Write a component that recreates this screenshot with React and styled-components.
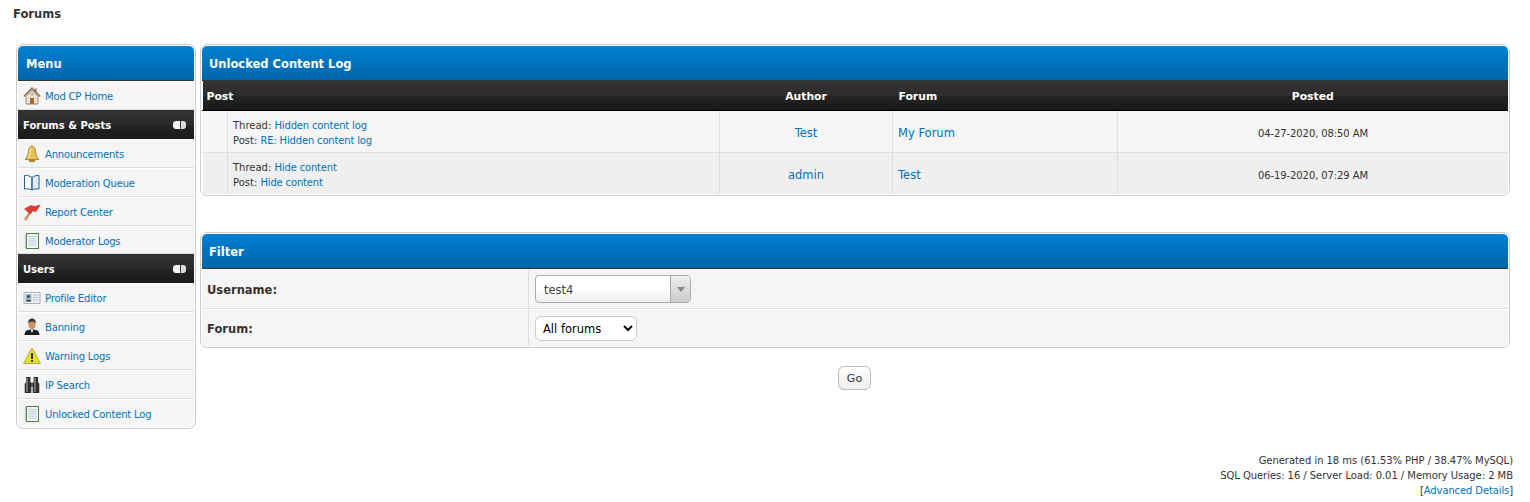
import React from "react";
import styled, { createGlobalStyle } from "styled-components";

const FONT = `"DejaVu Sans", Verdana, sans-serif`;
const DARK_BG = `
  linear-gradient(90deg, #303030 50%, transparent 50%) 0 14px / 2px 1px repeat-x,
  linear-gradient(90deg, transparent 50%, #262626 50%) 0 15px / 2px 1px repeat-x,
  linear-gradient(#333 0%, #2c2c2c 50%, #232323 54%, #1a1a1a 100%)
`;

const Global = createGlobalStyle`
  html, body { margin: 0; padding: 0; background: #fff; }
  body { font-family: ${FONT}; color: #333; font-size: 12px; }
  a { color: #0072bc; text-decoration: none; }
`;

const Page = styled.div`
  width: 1530px;
  height: 502px;
  overflow: hidden;
  position: relative;
`;
const Title = styled.div`
  height: 44px;
  padding: 8px 0 0 13px;
  box-sizing: border-box;
  font-weight: bold;
  font-size: 11.5px;
  line-height: 13px;
  color: #333;
`;
const Columns = styled.div`
  display: flex;
  align-items: flex-start;
  gap: 4px;
  padding: 0 20px 0 16px;
`;
const Panel = styled.div`
  box-sizing: border-box;
  border: 1px solid #ccc;
  border-radius: 7px;
  padding: 1px;
  background: #fff;
  overflow: hidden;
`;
const Side = styled(Panel)`
  width: 180px;
  flex: none;
`;
const Main = styled.div`
  width: 1310px;
  flex: none;
`;
const Blue = styled.div`
  height: 35px;
  box-sizing: border-box;
  padding: 2px 0 0 ${p => p.$pad || 8}px;
  display: flex;
  align-items: center;
  background: linear-gradient(#0080d4 0%, #0066a8 100%);
  border-bottom: 1px solid #263c30;
  border-radius: 5px 5px 0 0;
  color: #fff;
  font-weight: bold;
  font-size: 11.5px;
`;
const Dark = styled.div`
  height: 29px;
  box-sizing: border-box;
  padding: 1px 8px 0 5px;
  display: flex;
  align-items: center;
  justify-content: space-between;
  background: ${DARK_BG};
  color: #fff;
  font-weight: bold;
  font-size: 10px;
`;
const Toggle = styled.span`
  width: 13px;
  height: 8px;
  border-radius: 3px;
  background: linear-gradient(90deg, #f4f4f4 0 52%, #333 52% 60%, #dcdcdc 60% 100%);
`;
const MenuItem = styled.a`
  height: ${p => (p.$short ? 28 : 29)}px;
  box-sizing: border-box;
  display: flex;
  align-items: center;
  gap: 4px;
  padding: ${p => (p.$short ? 2 : 1)}px 0 0 5px;
  background: #f5f5f5;
  border-bottom: 1px solid #ddd;
  border-top: 1px solid #fff;
  font-size: 10px;
  letter-spacing: -0.18px;
  color: #0072bc;
  &:last-child { height: 28px; border-bottom: 0; }
`;
const IconBox = styled.svg`
  width: 18px;
  height: 18px;
  flex: none;
`;
const Table = styled.table`
  width: 100%;
  border-collapse: collapse;
  table-layout: fixed;
  font-size: 10px;
`;
const Th = styled.th`
  box-sizing: border-box;
  height: 29px;
  padding: 2px 0 0 ${p => p.$pad || 0}px;
  background: ${DARK_BG};
  border-bottom: 1px solid #000;
  color: #fff;
  font-size: 10.8px;
  text-align: ${p => p.$align || "center"};
`;
const Td = styled.td`
  box-sizing: border-box;
  height: 42px;
  padding: 4px 0 0 ${p => p.$pad || 0}px;
  background: ${p => (p.$alt ? "#efefef" : "#f5f5f5")};
  border-right: ${p => (p.$end ? "0" : "1px solid #ddd")};
  border-left: 1px solid #fff;
  border-bottom: ${p => (p.$alt ? "0" : "1px solid #ddd")};
  border-top: 1px solid #fff;
  text-align: ${p => p.$align || "left"};
  line-height: 15px;
  font-size: ${p => p.$size || 10}px;
  letter-spacing: ${p => p.$track || 0}px;
  color: #333;
`;
const PostLink = styled.a`
  letter-spacing: -0.17px;
`;
const Row = styled.div`
  display: grid;
  grid-template-columns: 327px 1fr;
  height: ${p => p.$h}px;
  box-sizing: border-box;
  background: #f5f5f5;
  border-bottom: ${p => (p.$last ? "0" : "1px solid #ddd")};
  border-top: 1px solid #fff;
`;
const Label = styled.div`
  border-right: 1px solid #ddd;
  display: flex;
  align-items: center;
  padding: 1px 0 0 5px;
  font-weight: bold;
  font-size: 11.5px;
  color: #333;
`;
const Field = styled.div`
  display: flex;
  align-items: center;
  padding-left: 6px;
`;
const Combo = styled.div`
  width: 156px;
  height: 28px;
  box-sizing: border-box;
  border: 1px solid #aaa;
  border-radius: 4px;
  background: linear-gradient(#fff 50%, #eee 100%);
  display: flex;
  align-items: center;
  justify-content: space-between;
  padding-left: 8px;
  font-size: 11.5px;
  line-height: 28px;
  color: #444;
  overflow: hidden;
`;
const ComboText = styled.span`
  padding-top: 2px;
`;
const ComboArrow = styled.div`
  width: 19px;
  height: 100%;
  border-left: 1px solid #aaa;
  background: linear-gradient(#eee, #ccc);
  display: flex;
  align-items: center;
  justify-content: center;
  &::after {
    content: "";
    border: 4px solid transparent;
    border-top: 5px solid #888;
    border-bottom: 0;
  }
`;
const Select = styled.select`
  width: 102px;
  height: 25px;
  box-sizing: border-box;
  border: 1px solid #ccc;
  border-radius: 6px;
  background: #fff;
  padding: 1px 0 0 3px;
  font-family: ${FONT};
  font-size: 11.5px;
  color: #000;
`;
const Actions = styled.div`
  display: flex;
  justify-content: center;
  margin-top: 18px;
  padding-right: 2px;
`;
const Button = styled.button`
  width: 33px;
  height: 24px;
  padding: 0 0 0 1px;
  box-sizing: border-box;
  border: 1px solid #bbb;
  border-radius: 6px;
  background: linear-gradient(#fff, #eee);
  font-family: ${FONT};
  font-size: 11px;
  color: #333;
`;
const Spacer = styled.div`
  height: 36px;
`;
const Footer = styled.div`
  position: absolute;
  right: 17px;
  top: 453px;
  text-align: right;
  font-size: 10px;
  letter-spacing: -0.05px;
  line-height: 15px;
  color: #333;
`;
const DetailsLink = styled.a`
  letter-spacing: -0.12px;
`;

const House = () => (
  <IconBox viewBox="0 0 18 18">
    <path d="M3 9.5 9 3.5 15 9.5V17H3Z" fill="#efe2cd" stroke="#8a7058" strokeWidth=".8" />
    <path d="M.8 9.5 9 1.2 17.2 9.5" fill="none" stroke="#8d6f55" strokeWidth="1.7" />
    <rect x="11.8" y="1.5" width="1.8" height="3.5" fill="#9a6a50" />
    <rect x="7" y="11" width="4" height="6" fill="#b1642a" />
    <circle cx="9" cy="7.4" r="1.2" fill="#8fa6b8" />
  </IconBox>
);
const Bell = () => (
  <IconBox viewBox="0 0 18 18">
    <path d="M9 1C6 1.5 5.6 4 5.3 8 5 11 3.4 12.6 2.2 14.5H15.8C14.6 12.6 13 11 12.7 8 12.4 4 12 1.5 9 1Z" fill="#e8c35a" stroke="#a2802a" strokeWidth=".9" />
    <path d="M7.4 3.5C6.8 6 7 10 5.5 13" stroke="#f7e7a8" strokeWidth="1.1" fill="none" />
    <ellipse cx="9" cy="15.8" rx="3.4" ry="1.4" fill="#a8842c" />
  </IconBox>
);
const Book = () => (
  <IconBox viewBox="0 0 18 18">
    <path d="M1.5 1.5C4 1.2 7 2 8.8 3.2V16C7 15 4 14.5 1.5 15Z" fill="#f4f9fc" stroke="#2a5f8c" />
    <path d="M16 1.5C13.5 1.2 10.8 2 9.2 3.2V16C10.8 15 13.5 14.5 16 15Z" fill="#e0ecf4" stroke="#2a5f8c" />
  </IconBox>
);
const Flag = () => (
  <IconBox viewBox="0 0 18 18">
    <path d="M2 17 8 8" stroke="#d2935c" strokeWidth="2.4" />
    <path d="M1.5 6 7.5 2.5 12 3.5 17.2 2 13 8.5 9.5 8 7.5 11Z" fill="#e23a32" stroke="#b32a24" strokeWidth=".5" />
  </IconBox>
);
const Notes = () => (
  <IconBox viewBox="0 0 18 18">
    <rect x="3.5" y="1.5" width="12" height="15" fill="#f3f8f3" stroke="#4c7d45" />
    <path d="M5.5 4.5H13.5M5.5 6.7H13.5M5.5 8.9H13.5M5.5 11.1H13.5M5.5 13.3H13.5" stroke="#b5cbdb" />
    <path d="M2.6 2.5V16" stroke="#999" strokeWidth="1.6" strokeDasharray="1 1" />
  </IconBox>
);
const Card = () => (
  <IconBox viewBox="0 0 18 18">
    <rect x="1" y="3.5" width="16" height="11" fill="#eef2f4" stroke="#a9b5ba" />
    <rect x="2.5" y="5" width="6" height="7.5" fill="#a5bccc" />
    <circle cx="5.5" cy="7.5" r="1.6" fill="#3f4e5b" />
    <path d="M3 12.5C3 10 8 10 8 12.5Z" fill="#333" />
    <path d="M10 6H15.5M10 8.5H15.5M10 11H15.5" stroke="#b3c0c8" />
  </IconBox>
);
const Person = () => (
  <IconBox viewBox="0 0 18 18">
    <path d="M1.5 17C1.5 12.5 5 11.5 9 11.5S16.5 12.5 16.5 17Z" fill="#1c1c1c" />
    <path d="M7.5 11.5 9 15 10.5 11.5Z" fill="#eee" />
    <ellipse cx="9" cy="6.5" rx="3.6" ry="4.8" fill="#c9936a" />
    <path d="M5.2 5.5C5 1.5 7 .5 9 .5S13 1.5 12.8 5.5C11.5 3.2 6.5 3.2 5.2 5.5Z" fill="#4a3a30" />
  </IconBox>
);
const Warn = () => (
  <IconBox viewBox="0 0 18 18">
    <path d="M9 1 17.5 16.5H.5Z" fill="#e5e02e" stroke="#b5ae35" strokeLinejoin="round" />
    <rect x="8.1" y="6" width="1.8" height="6" fill="#222" />
    <rect x="8.1" y="13" width="1.8" height="1.8" fill="#222" />
  </IconBox>
);
const Binoculars = () => (
  <IconBox viewBox="0 0 18 18">
    <path d="M3 1H7.4V6L8.3 8V17H1.7V8L3 6Z" fill="#2e2e2e" />
    <path d="M10.6 1H15V6L16.3 8V17H9.7V8L10.6 6Z" fill="#2e2e2e" />
    <rect x="8" y="6.5" width="2" height="4.5" fill="#555" />
    <rect x="3.2" y="2" width="1.6" height="14" fill="#808080" />
    <rect x="11.2" y="2" width="1.6" height="14" fill="#808080" />
  </IconBox>
);

const menu1 = [
  [Bell, "Announcements"],
  [Book, "Moderation Queue"],
  [Flag, "Report Center"],
  [Notes, "Moderator Logs"],
];
const menu2 = [
  [Card, "Profile Editor"],
  [Person, "Banning"],
  [Warn, "Warning Logs"],
  [Binoculars, "IP Search"],
  [Notes, "Unlocked Content Log"],
];

const Item = ({ icon: I, label, short }) => (
  <MenuItem href="#" $short={short}><I />{label}</MenuItem>
);

export default function App() {
  return (
    <Page>
      <Global />
      <Title>Forums</Title>
      <Columns>
        <Side>
          <Blue>Menu</Blue>
          <Item icon={House} label="Mod CP Home" />
          <Dark>Forums &amp; Posts<Toggle /></Dark>
          {menu1.map(([i, l], n) => <Item key={l} icon={i} label={l} short={n === 3} />)}
          <Dark>Users<Toggle /></Dark>
          {menu2.map(([i, l]) => <Item key={l} icon={i} label={l} />)}
        </Side>
        <Main>
          <Panel>
            <Blue $pad={7}>Unlocked Content Log</Blue>
            <Table>
              <colgroup>
                <col style={{ width: 25 }} />
                <col style={{ width: 492 }} />
                <col style={{ width: 173 }} />
                <col style={{ width: 225 }} />
                <col />
              </colgroup>
              <thead>
                <tr>
                  <Th colSpan={2} $align="left" $pad={4}>Post</Th>
                  <Th>Author</Th>
                  <Th $align="left" $pad={6}>Forum</Th>
                  <Th>Posted</Th>
                </tr>
              </thead>
              <tbody>
                <tr>
                  <Td />
                  <Td $pad={5}>Thread: <PostLink href="#">Hidden content log</PostLink><br />Post: <PostLink href="#">RE: Hidden content log</PostLink></Td>
                  <Td $align="center" $size={11.5}><a href="#">Test</a></Td>
                  <Td $pad={5} $size={11.5}><a href="#">My Forum</a></Td>
                  <Td $align="center" $end $track={-0.1}>04-27-2020, 08:50 AM</Td>
                </tr>
                <tr>
                  <Td $alt />
                  <Td $alt $pad={5}>Thread: <PostLink href="#">Hide content</PostLink><br />Post: <PostLink href="#">Hide content</PostLink></Td>
                  <Td $alt $align="center" $size={11.5}><a href="#">admin</a></Td>
                  <Td $alt $pad={5} $size={11.5}><a href="#">Test</a></Td>
                  <Td $alt $align="center" $end $track={-0.1}>06-19-2020, 07:29 AM</Td>
                </tr>
              </tbody>
            </Table>
          </Panel>
          <Spacer />
          <Panel>
            <Blue $pad={7}>Filter</Blue>
            <Row $h={40}>
              <Label>Username:</Label>
              <Field><Combo><ComboText>test4</ComboText><ComboArrow /></Combo></Field>
            </Row>
            <Row $h={37} $last>
              <Label>Forum:</Label>
              <Field><Select defaultValue="all"><option value="all">All forums</option></Select></Field>
            </Row>
          </Panel>
          <Actions><Button>Go</Button></Actions>
        </Main>
      </Columns>
      <Footer>
        Generated in 18 ms (61.53% PHP / 38.47% MySQL)<br />
        SQL Queries: 16 / Server Load: 0.01 / Memory Usage: 2 MB<br />
        [<DetailsLink href="#">Advanced Details</DetailsLink>]
      </Footer>
    </Page>
  );
}
